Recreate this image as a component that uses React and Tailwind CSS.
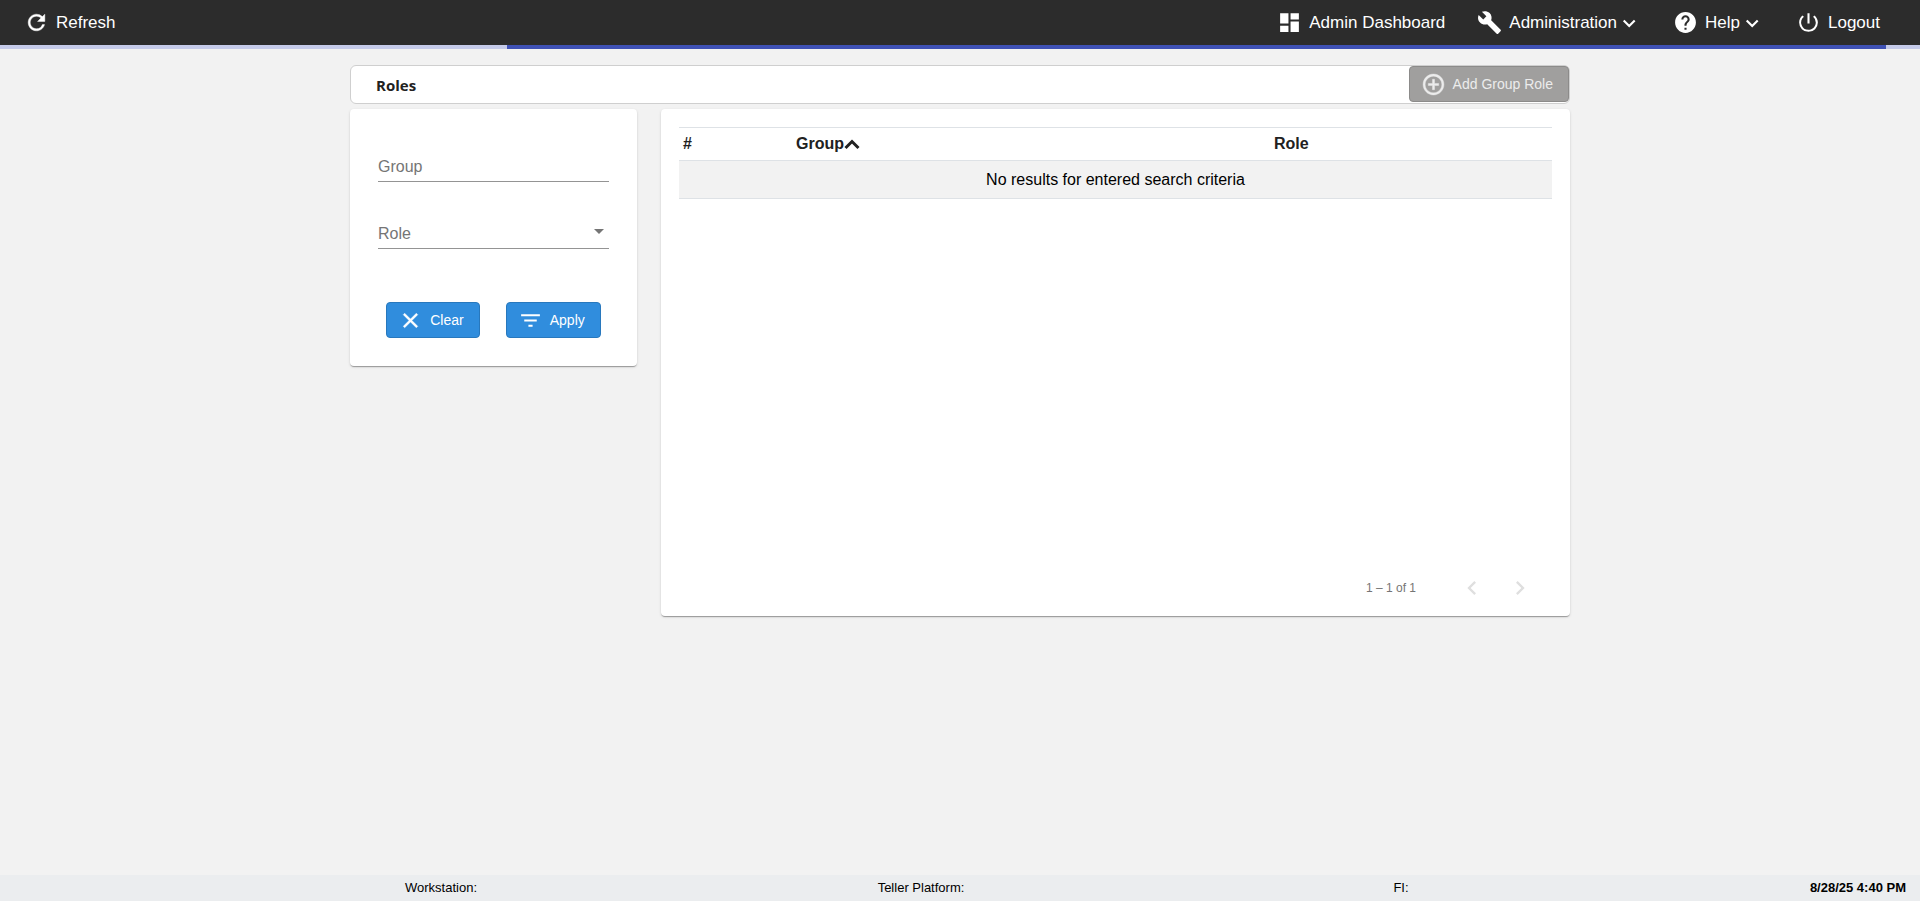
import React from "react";
import {
  MdRefresh,
  MdDashboard,
  MdBuild,
  MdHelp,
  MdPowerSettingsNew,
  MdAddCircleOutline,
  MdClose,
  MdFilterList,
  MdChevronLeft,
  MdChevronRight,
  MdArrowDropDown,
} from "react-icons/md";

const HEAVY = "stroke-[0.4] [&_[fill=none]]:stroke-none";

function NavItem({ icon: Icon, label, menu, heavy }) {
  return (
    <button type="button" className="flex items-center whitespace-nowrap text-[17px] leading-6">
      <Icon className={"mr-[7px] size-[25px] " + (heavy ? HEAVY : "")} />
      {label}
      {menu && (
        <svg viewBox="0 0 24 24" className="size-6" fill="none" stroke="currentColor" strokeWidth="2.1">
          <path d="M6.7 9.5l5.5 5.5 5.5-5.5" />
        </svg>
      )}
    </button>
  );
}

function ActionButton({ icon: Icon, label, tone, heavy, disabled }) {
  return (
    <button
      type="button"
      disabled={disabled}
      className={
        "flex h-9 items-center whitespace-nowrap rounded border pl-[11px] pr-[15px] text-sm " + tone
      }
    >
      <Icon className={"mr-[7px] size-[25px] " + (heavy ? HEAVY : "")} />
      {label}
    </button>
  );
}

const BLUE = "border-[#2878bd] bg-[#308ddd] text-white";
const GREY = "border-[#8c8b8a] bg-[#a09f9e] text-[#ececec]";
const CARD =
  "rounded bg-white shadow-[0_2px_1px_-1px_rgba(0,0,0,0.2),0_1px_1px_0_rgba(0,0,0,0.14),0_1px_3px_0_rgba(0,0,0,0.12)]";
const FIELD = "block h-[30px] w-full appearance-none border-b border-[#949494] text-base outline-none";
const FIELD_LABEL = "pointer-events-none absolute left-0 top-0 text-base leading-[30px] text-[#757575]";

export default function App() {
  return (
    <div className="flex min-h-screen flex-col bg-[#f2f2f2] font-['Liberation_Sans',Arial,sans-serif] text-black">
      <header className="flex h-[45px] items-center justify-between bg-[#2c2c2c] pl-6 pr-10 text-white">
        <NavItem icon={MdRefresh} label="Refresh" heavy />
        <nav className="flex items-center gap-8">
          <NavItem icon={MdDashboard} label="Admin Dashboard" />
          <NavItem icon={MdBuild} label="Administration" menu />
          <NavItem icon={MdHelp} label="Help" menu />
          <NavItem icon={MdPowerSettingsNew} label="Logout" />
        </nav>
      </header>
      <div role="progressbar" aria-label="Loading" className="flex h-1 bg-[#c5cae9]">
        <div className="w-[26.4%]" />
        <div className="w-[71.85%] bg-[#3f51b5]" />
      </div>

      <main className="mx-auto mt-4 w-full max-w-[1220px] flex-1">
        <div className="flex h-[39px] items-start justify-between rounded-md border border-[#cfcfcf] bg-white pl-[25px]">
          <h1 className="pt-[7px] font-['Open_Sans',sans-serif] text-[15px] font-bold leading-6 text-[#212121]">
            Roles
          </h1>
          <ActionButton icon={MdAddCircleOutline} label="Add Group Role" tone={GREY} heavy disabled />
        </div>

        <div className="mt-[5px] flex items-start gap-6">
          <form className={"w-[287px] px-7 pb-7 pt-[43px] " + CARD}>
            <div className="relative">
              <input id="group" type="text" className={FIELD} />
              <label htmlFor="group" className={FIELD_LABEL}>Group</label>
            </div>
            <div className="relative mt-[37px]">
              <select id="role" className={FIELD} />
              <label htmlFor="role" className={FIELD_LABEL}>Role</label>
              <MdArrowDropDown className="pointer-events-none absolute -right-0.5 top-0 size-6 text-[#757575]" />
            </div>
            <div className="mt-[53px] flex justify-center gap-[26px]">
              <ActionButton icon={MdClose} label="Clear" tone={BLUE} heavy />
              <ActionButton icon={MdFilterList} label="Apply" tone={BLUE} />
            </div>
          </form>

          <section className={"flex min-h-[507px] flex-1 flex-col justify-between px-[18px] pb-[14px] pt-[18px] " + CARD}>
            <table className="w-full table-fixed border-collapse border-t border-[#dee2e6] text-base leading-6">
              <thead>
                <tr className="h-[33px] border-b border-[#dee2e6] text-left text-[#212121]">
                  <th className="w-[113px] px-1">#</th>
                  <th className="px-1">
                    <button type="button" className="flex items-center">
                      Group
                      <svg viewBox="0 0 16 16" className="size-4" fill="none" stroke="currentColor" strokeWidth="3">
                        <path d="M1.5 12l6.5-6.5 6.5 6.5" />
                      </svg>
                    </button>
                  </th>
                  <th className="w-[32.3%] px-1">Role</th>
                </tr>
              </thead>
              <tbody>
                <tr className="h-[38px] border-b border-[#dee2e6] bg-[#f2f2f2]">
                  <td colSpan={3} className="text-center">No results for entered search criteria</td>
                </tr>
              </tbody>
            </table>
            <div className="flex items-center justify-end pr-[18px] text-xs text-[#757575]">
              <span className="mr-[42px]">1 – 1 of 1</span>
              <button type="button" disabled aria-label="Previous page" className="mr-5 text-[#dfdfdf]">
                <MdChevronLeft className="size-7" />
              </button>
              <button type="button" disabled aria-label="Next page" className="text-[#dfdfdf]">
                <MdChevronRight className="size-7" />
              </button>
            </div>
          </section>
        </div>
      </main>

      <footer className="grid h-[26px] grid-cols-[1fr_25%_25%_25%_279px] items-center bg-[#ebedef] text-center text-[13px]">
        <span className="col-start-2">Workstation:</span>
        <span>Teller Platform:</span>
        <span>FI:</span>
        <time className="pr-[14px] text-right font-bold">8/28/25 4:40 PM</time>
      </footer>
    </div>
  );
}
